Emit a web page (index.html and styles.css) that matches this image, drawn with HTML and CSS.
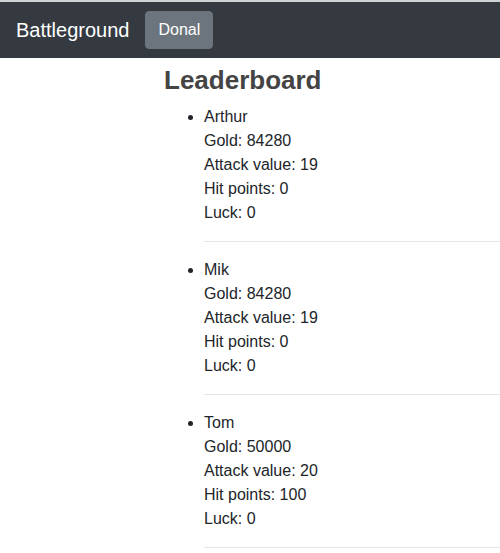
FILE: index.html
```html
<!DOCTYPE html>
<html>
<head>
<meta charset="utf-8">
<link rel="stylesheet" href="styles.css">
</head>
<body>
<div class="topline"></div>
<nav class="navbar">
  <span class="brand">Battleground</span>
  <button class="btn">Donal</button>
</nav>
<main class="content">
  <h2 class="title">Leaderboard</h2>
  <ul class="board">
    <li>Arthur<br>Gold: 84280<br>Attack value: 19<br>Hit points: 0<br>Luck: 0<hr class="sep"></li>
    <li>Mik<br>Gold: 84280<br>Attack value: 19<br>Hit points: 0<br>Luck: 0<hr class="sep"></li>
    <li>Tom<br>Gold: 50000<br>Attack value: 20<br>Hit points: 100<br>Luck: 0<hr class="sep"></li>
  </ul>
</main>
</body>
</html>
```
FILE: styles.css
```css
* { box-sizing: border-box; }
html, body { margin: 0; padding: 0; }
body {
  font-family: "Liberation Sans", Arial, sans-serif;
  font-size: 16px;
  line-height: 24px;
  color: #212529;
  background: #fff;
  overflow: hidden;
}
.topline { height: 2px; background: #cfd1d3; }
.navbar {
  height: 56px;
  background: #343a40;
  display: flex;
  align-items: center;
  padding: 0 16px;
}
.brand {
  color: #fff;
  font-size: 20px;
  line-height: 30px;
  margin-right: 16px;
}
.btn {
  font-family: "Liberation Sans", Arial, sans-serif;
  font-size: 16px;
  line-height: 24px;
  padding: 6px 12px;
  height: 38px;
  color: #fff;
  background: #6c757d;
  border: 1px solid #6c757d;
  border-radius: 4px;
}
.content { padding-left: 164px; }
.title {
  margin: 7px 0 9px;
  font-size: 26px;
  line-height: 31px;
  font-weight: bold;
  color: #444;
}
.board {
  margin: 0;
  padding-left: 40px;
}
.sep {
  margin: 16px 0;
  border: 0;
  border-top: 1px solid rgba(0,0,0,0.1);
}
```
